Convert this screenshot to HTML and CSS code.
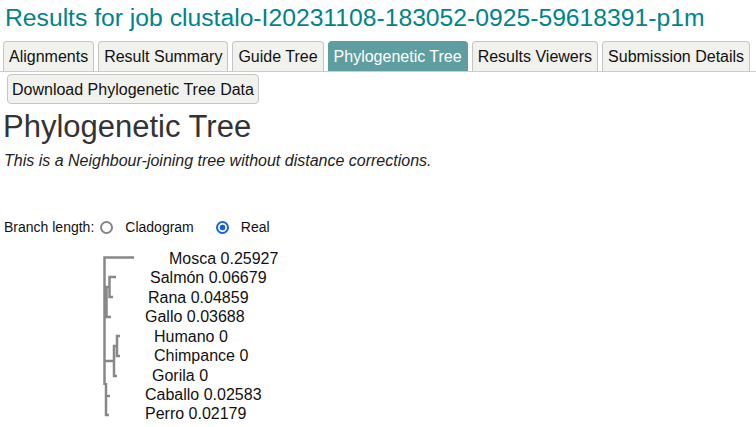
FILE: index.html
```html
<!DOCTYPE html>
<html lang="es">
<head>
<meta charset="utf-8">
<title>Results for job clustalo-I20231108-183052-0925-59618391-p1m</title>
<link rel="stylesheet" href="styles.css">
</head>
<body>
<div class="page">
  <h1 class="job-title">Results for job clustalo-I20231108-183052-0925-59618391-p1m</h1>
  <ul class="tabs">
    <li class="tab">Alignments</li>
    <li class="tab">Result Summary</li>
    <li class="tab">Guide Tree</li>
    <li class="tab tab-active">Phylogenetic Tree</li>
    <li class="tab">Results Viewers</li>
    <li class="tab">Submission Details</li>
  </ul>
  <button class="download" type="button">Download Phylogenetic Tree Data</button>
  <h2 class="section-title">Phylogenetic Tree</h2>
  <p class="note">This is a Neighbour-joining tree without distance corrections.</p>
  <div class="branch-row">
    <span class="branch-label">Branch length:</span>
    <input class="radio radio-first" type="radio" name="branch" id="clado">
    <label class="radio-label" for="clado">Cladogram</label>
    <input class="radio radio-second" type="radio" name="branch" id="real" checked>
    <label class="radio-label" for="real">Real</label>
  </div>
  <svg class="tree" width="300" height="187" viewBox="4 240 300 187" xmlns="http://www.w3.org/2000/svg">
    <path class="branches" d="M134 258.5 H104.5 V386
      M116 278 H109.5 V298 H113
      M109.5 288 H106.5 V318 H111
      M120 337 H117 V357 H120
      M117 347 H114 V377 H117
      M114 362 H104.5
      M106 384 V416 H109
      M106 397 H110"/>
    <g class="labels">
      <text x="169" y="264.8">Mosca 0.25927</text>
      <text x="150" y="284.3">Salmón 0.06679</text>
      <text x="148" y="303.7">Rana 0.04859</text>
      <text x="145" y="323.2">Gallo 0.03688</text>
      <text x="154" y="342.6">Humano 0</text>
      <text x="154" y="362.1">Chimpance 0</text>
      <text x="152" y="381.5">Gorila 0</text>
      <text x="145" y="401">Caballo 0.02583</text>
      <text x="145" y="420.4">Perro 0.02179</text>
    </g>
  </svg>
</div>
</body>
</html>
```

FILE: styles.css
```css
html, body {
  margin: 0;
  padding: 0;
  background: #ffffff;
}

body {
  font-family: "Liberation Sans", Arial, sans-serif;
  color: #111111;
  overflow: hidden;
}

.page {
  padding: 0 0 0 4px;
}

.job-title {
  margin: 3px 0 0 0;
  padding-left: 1px;
  font-size: 24.7px;
  line-height: 30px;
  font-weight: normal;
  color: #00838a;
  white-space: nowrap;
}

.tabs {
  display: flex;
  align-items: flex-end;
  gap: 4px;
  list-style: none;
  margin: 8px 0 0 -4px;
  padding: 0 0 0 3px;
  border-bottom: 1px solid #cccccc;
}

.tab {
  font-size: 16px;
  line-height: 18px;
  padding: 6px 5px 5px;
  border: 1px solid #c5c5c5;
  border-bottom: none;
  border-radius: 4px 4px 0 0;
  background: #f1f1ed;
  color: #111111;
  white-space: nowrap;
}

.tab-active {
  background: #5f9ea0;
  border-color: #5f9ea0;
  color: #ffffff;
}

.download {
  display: block;
  margin: 2px 0 0 3px;
  padding: 6px 4px 4px;
  font-family: "Liberation Sans", Arial, sans-serif;
  font-size: 16px;
  line-height: 18px;
  color: #111111;
  background: #f1f1ed;
  border: 1px solid #c5c5c5;
  border-radius: 4px;
}

.section-title {
  margin: 5px 0 0 -1px;
  font-size: 31px;
  line-height: 36px;
  font-weight: normal;
  color: #333333;
}

.note {
  margin: 7px 0 0 0;
  font-size: 16px;
  line-height: 18px;
  font-style: italic;
  color: #222222;
}

.branch-row {
  display: flex;
  align-items: center;
  margin-top: 49px;
  font-size: 14px;
  line-height: 16px;
  color: #111111;
}

.radio {
  -webkit-appearance: none;
  appearance: none;
  box-sizing: border-box;
  width: 13px;
  height: 13px;
  margin: 0;
  border: 2px solid #858585;
  border-radius: 50%;
  background: #ffffff;
  flex: none;
}

.radio:checked {
  border-color: #1565d8;
  background: radial-gradient(circle, #1565d8 0, #1565d8 2.6px, #ffffff 3.2px);
}

.radio-first {
  margin-left: 6px;
}

.radio-second {
  margin-left: 22px;
}

.radio-label {
  margin-left: 12px;
}

.tree {
  display: block;
  margin-top: 4px;
}

.branches {
  fill: none;
  stroke: #888888;
  stroke-width: 2.5;
}

.labels text {
  font-family: "Liberation Sans", Arial, sans-serif;
  font-size: 16px;
  fill: #111111;
}
```
